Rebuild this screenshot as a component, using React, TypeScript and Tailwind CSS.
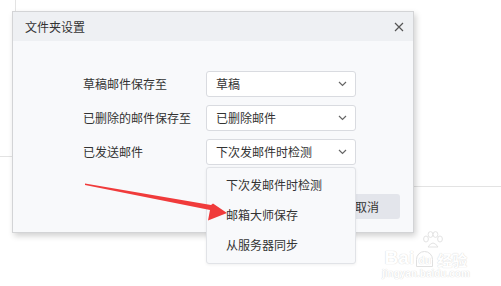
import React from 'react';

const rows = [
  { label: '草稿邮件保存至', value: '草稿' },
  { label: '已删除的邮件保存至', value: '已删除邮件' },
  { label: '已发送邮件', value: '下次发邮件时检测' },
];

const options = ['下次发邮件时检测', '邮箱大师保存', '从服务器同步'];

function Chevron() {
  return (
    <svg width="9" height="6" viewBox="0 0 9 6" className="shrink-0">
      <polyline points="1,1 4.5,4.5 8,1" fill="none" stroke="#666" strokeWidth="1.2" />
    </svg>
  );
}

function Select({ value }: { value: string }) {
  return (
    <div className="w-[150px] h-[26px] bg-white border border-[#d9dbe0] rounded-[3px] flex items-center justify-between pl-[9px] pr-[8px]">
      <span className="text-[12px] text-[#333]">{value}</span>
      <Chevron />
    </div>
  );
}

export default function App() {
  return (
    <div className="relative w-[501px] h-[286px] bg-white overflow-hidden font-['Noto_Sans_CJK_SC','Noto_Sans',sans-serif] text-[#333]">
      {/* 背后页面的分隔线 */}
      <div className="absolute left-[15px] top-0 w-px h-[12px] bg-[#e3e3e3]" />
      <div className="absolute left-0 top-[156px] w-[12px] h-px bg-[#e3e3e3]" />
      <div className="absolute left-[413px] top-[186px] w-[88px] h-px bg-[#e3e3e3]" />

      {/* 对话框 */}
      <div className="absolute left-[12px] top-[11px] w-[402px] h-[222px] flex flex-col border border-[#d3d4d6] shadow-[2px_3px_6px_rgba(0,0,0,0.18)]">
        <div className="h-[29px] bg-[#eef0f3] flex items-center justify-between pl-[12px] pr-[9px]">
          <span className="text-[12px] text-[#333]">文件夹设置</span>
          <svg width="10" height="10" viewBox="0 0 10 10">
            <path d="M1 1L9 9M9 1L1 9" stroke="#555" strokeWidth="1.2" />
          </svg>
        </div>
        <div className="flex-1 bg-[#f8f9fb] flex flex-col pt-[30px] pl-[70px] pr-[13px]">
          <div className="flex flex-col gap-[8px]">
            {rows.map((r) => (
              <div key={r.label} className="flex items-center">
                <span className="w-[123px] text-[12px] text-[#333]">{r.label}</span>
                <Select value={r.value} />
              </div>
            ))}
          </div>
          <div className="mt-[29px] flex justify-end gap-[8px]">
            {/* 确定按钮被下拉菜单遮住 */}
            <div className="w-[66px] h-[25px] rounded-[3px] bg-[#3d7ee8]" />
            <div className="w-[66px] h-[25px] rounded-[3px] bg-[#e3e5eb] text-[#333] text-[12px] flex items-center justify-center">取消</div>
          </div>
        </div>
      </div>

      {/* 下拉菜单 */}
      <div className="absolute left-[206px] top-[167px] w-[150px] bg-[#f8f9fb] border border-[#e1e3e7] rounded-[3px] pt-[2px] pb-[3px] shadow-[0_1px_3px_rgba(0,0,0,0.06)]">
        {options.map((o) => (
          <div key={o} className="h-[30px] flex items-center pl-[19px] text-[12px] text-[#333]">
            {o}
          </div>
        ))}
      </div>

      {/* 红色箭头 */}
      <svg className="absolute left-0 top-0 pointer-events-none" width="501" height="286" viewBox="0 0 501 286">
        <polygon
          points="85,183.5 211,205 213,203.5 227,213 208,220.5 210,210 85,185"
          fill="#f03b3b"
        />
      </svg>

      {/* 水印 */}
      <div className="absolute left-[382px] top-[231px] flex flex-col items-center text-white [text-shadow:0_0_1px_#dcdcdc,0_0_1px_#dcdcdc]">
        <svg width="22" height="18" viewBox="0 0 22 18" className="ml-[14px]">
          <g fill="white" stroke="#e0e0e0" strokeWidth="0.9">
            <ellipse cx="4" cy="8" rx="2.4" ry="3" />
            <ellipse cx="8.5" cy="3.5" rx="2.4" ry="2.9" />
            <ellipse cx="13.5" cy="3.5" rx="2.4" ry="2.9" />
            <ellipse cx="18" cy="8" rx="2.4" ry="3" />
            <path d="M6 16 Q11 8 16 16 Z" />
          </g>
        </svg>
        <div className="flex items-end leading-none -mt-[1px]">
          <span className="text-[19px] font-bold font-['Liberation_Sans',sans-serif]">Bai</span>
          <span className="ml-[2px] w-[17px] h-[16px] rounded-t-full border border-[#e0e0e0] text-[10px] font-bold flex items-end justify-center font-['Liberation_Sans',sans-serif]">du</span>
          <span className="ml-[4px] text-[15px] font-bold">经验</span>
        </div>
        <span className="mt-[2px] text-[10px] font-bold leading-none font-['Liberation_Sans',sans-serif]">jingyan.baidu.com</span>
      </div>
    </div>
  );
}
